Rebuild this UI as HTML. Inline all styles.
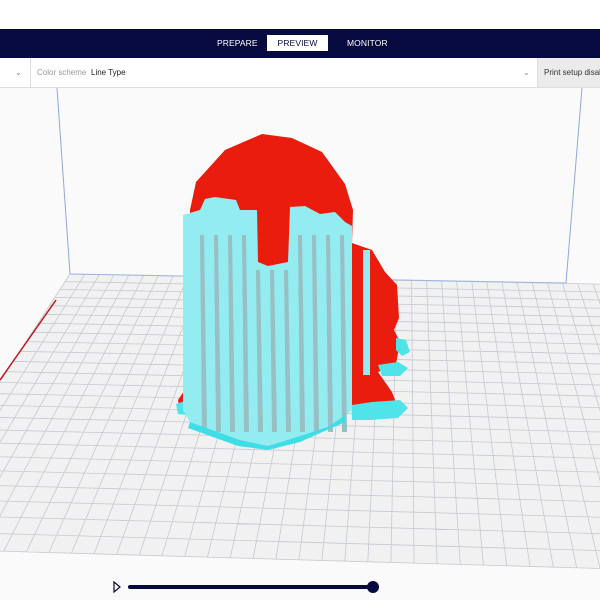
<!DOCTYPE html>
<html><head><meta charset="utf-8"><style>
*{margin:0;padding:0;box-sizing:border-box}
body{width:600px;height:600px;overflow:hidden;background:#fafafa;font-family:"Liberation Sans",sans-serif;position:relative}
.top{position:absolute;left:0;top:0;width:600px;height:29px;background:#fff}
.nav{position:absolute;left:0;top:29px;width:600px;height:29px;background:#070a3f}
.nav span{position:absolute;top:9px;font-size:8.5px;color:#fff;letter-spacing:0.1px}
.nav .act{left:267px;top:6px;width:61px;height:16px;background:#fff;color:#070a3f;text-align:center;line-height:16px}
.bar{position:absolute;left:0;top:58px;width:600px;height:30px;background:#fff;border-bottom:1px solid #ddd}
.bar span{position:absolute;top:10px;font-size:8px}
.grey{position:absolute;left:537px;top:0;width:63px;height:29px;background:#ebebeb;border-left:1px solid #ddd}
</style></head><body>
<svg id="sv" width="600" height="600" style="position:absolute;left:0;top:0">
<g id="grid"></g>
<line x1="57" y1="88" x2="70" y2="274" stroke="#8fa8dc" stroke-width="1"/>
<line x1="582" y1="88" x2="566" y2="283" stroke="#8fa8dc" stroke-width="1"/>
<line x1="70" y1="274" x2="566" y2="283" stroke="#9fb4e0" stroke-width="1"/>
<line x1="0" y1="380" x2="56" y2="300" stroke="#c0141a" stroke-width="1.5"/>
<!-- red body -->
<path d="M190,210 L196,182 L225,150 L262,134 L292,138 L322,152 L345,184 L353,210 L352,243 L372,250 L385,272 L397,285 L399,318 L394,330 L400,342 L396,364 L378,372 L392,392 L398,408 L360,418 L352,420 L350,290 L190,290 Z" fill="#ea1c0e"/>
<path d="M178,400 L186,388 L200,392 L200,412 L180,412 Z" fill="#ea1c0e"/>
<!-- brims -->
<path d="M352,405 L372,402 L400,400 L408,408 L398,418 L370,420 L352,420 Z" fill="#4fe3ea"/>
<path d="M378,365 L398,362 L408,368 L400,376 L382,376 Z" fill="#4fe3ea"/>
<path d="M396,338 L406,340 L410,352 L402,356 L396,350 Z" fill="#4fe3ea"/>
<path d="M176,404 L188,400 L196,404 L196,416 L178,414 Z" fill="#4fe3ea"/>
<!-- cyan column -->
<path d="M183,215 L200,210 L205,199 L215,197 L236,200 L240,210 L257,210 L258,262 L268,266 L288,262 L290,207 L305,206 L320,214 L335,212 L345,222 L352,226 L352,410 L340,420 L330,426 L300,436 L268,446 L240,440 L212,430 L190,422 L183,410 Z" fill="#93ecf0"/>
<g id="stripes"></g>
<path d="M190,422 L212,430 L240,440 L268,446 L300,436 L330,426 L345,415 L345,422 L300,442 L268,450 L238,446 L188,428 Z" fill="#3fdde6"/>
<rect x="363" y="250" width="7" height="125" fill="#93ecf0"/>
<!-- slider -->
<path d="M114,582 L120,587 L114,592 Z" fill="none" stroke="#070a3f" stroke-width="1.2"/>
<line x1="130" y1="587" x2="373" y2="587" stroke="#070a3f" stroke-width="4" stroke-linecap="round"/>
<circle cx="373" cy="587" r="6" fill="#070a3f"/>
</svg>
<div class="top"></div>
<div class="nav"><span style="left:217px">PREPARE</span><span class="act">PREVIEW</span><span style="left:347px">MONITOR</span></div>
<div class="bar">
<span style="left:15px;color:#888">&#8964;</span>
<div style="position:absolute;left:30px;top:0;width:1px;height:29px;background:#ddd"></div>
<span style="left:37px;color:#999">Color scheme</span><span style="left:91px;color:#222">Line Type</span>
<span style="left:523px;color:#888">&#8964;</span>
<div class="grey"><span style="left:6px;color:#333;white-space:nowrap">Print setup disabled</span></div>
</div>
<script>
var ns="http://www.w3.org/2000/svg";
var x0=70,y0=274,x1=700,y1=286,x2=860,y2=576,x3=-108,y3=548;
var dx1=x1-x2,dx2=x3-x2,dx3=x0-x1+x2-x3,dy1=y1-y2,dy2=y3-y2,dy3=y0-y1+y2-y3;
var den=dx1*dy2-dx2*dy1,g=(dx3*dy2-dx2*dy3)/den,h=(dx1*dy3-dx3*dy1)/den;
var a=x1-x0+g*x1,b=x3-x0+h*x3,c=x0,d=y1-y0+g*y1,e=y3-y0+h*y3,f=y0;
function P(u,v){var w=g*u+h*v+1;return [(a*u+b*v+c)/w,(d*u+e*v+f)/w];}
var G=document.getElementById("grid");
var poly=document.createElementNS(ns,"polygon");
poly.setAttribute("points",x0+","+y0+" "+x1+","+y1+" "+x2+","+y2+" "+x3+","+y3);
poly.setAttribute("fill","#f1f1f1");G.appendChild(poly);
var s="",NC=42,NR=24;
for(var i=0;i<=NC;i++){var p=P(i/NC,0),q=P(i/NC,1);s+="M"+p[0].toFixed(1)+","+p[1].toFixed(1)+"L"+q[0].toFixed(1)+","+q[1].toFixed(1);}
for(var j=0;j<=NR;j++){var p=P(0,j/NR),q=P(1,j/NR);s+="M"+p[0].toFixed(1)+","+p[1].toFixed(1)+"L"+q[0].toFixed(1)+","+q[1].toFixed(1);}
var pa=document.createElementNS(ns,"path");pa.setAttribute("d",s);pa.setAttribute("stroke","#c4c9d2");pa.setAttribute("stroke-width","0.8");pa.setAttribute("fill","none");G.appendChild(pa);
var S=document.getElementById("stripes"),xs=[200,214,228,242,256,270,284,298,312,326,340],st="";
xs.forEach(function(x,k){var t=(k>=4&&k<=6)?270:235;st+="M"+x+","+t+"L"+(x+4)+","+t+"L"+(x+7)+",432L"+(x+2)+",432Z";});
var sp=document.createElementNS(ns,"path");sp.setAttribute("d",st);sp.setAttribute("fill","#98bfc3");S.appendChild(sp);
</script>
</body></html>
